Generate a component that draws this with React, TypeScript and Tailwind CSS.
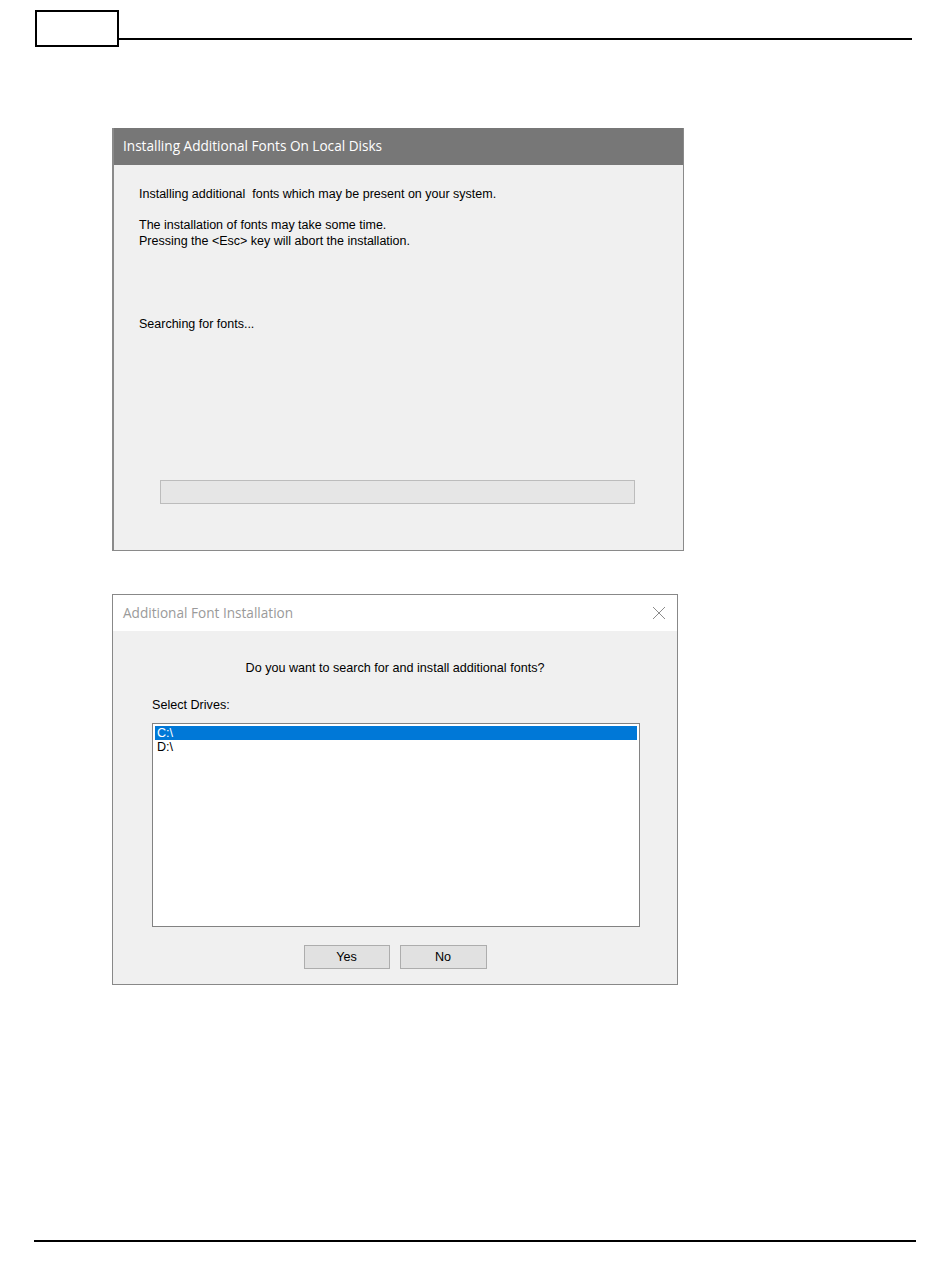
import React from 'react';

const ui = { fontFamily: '"Liberation Sans", Arial, sans-serif' };
const title = { fontFamily: '"Open Sans", "Liberation Sans", sans-serif' };

const ProgressDialog: React.FC = () => (
  <div className="w-[572px] h-[423px] flex flex-col border-l-2 border-r border-b border-[#8a8a8a] bg-[#f0f0f0]">
    <div className="h-[37px] bg-[#777777] flex items-center pl-[9px] text-white text-[13.6px]" style={title}>
      Installing Additional Fonts On Local Disks
    </div>
    <div className="flex flex-col pl-[25px] pt-[21px] text-[12.5px] leading-[16px] text-black" style={ui}>
      <p>Installing additional&nbsp; fonts which may be present on your system.</p>
      <p className="mt-[15px]">The installation of fonts may take some time.</p>
      <p>Pressing the &lt;Esc&gt; key will abort the installation.</p>
      <p className="mt-[67px]">Searching for fonts...</p>
      <div className="ml-[21px] mt-[148px] w-[475px] h-[24px] bg-[#e6e6e6] border border-[#bcbcbc]" />
    </div>
  </div>
);

const DriveDialog: React.FC = () => (
  <div className="w-[566px] h-[391px] flex flex-col border border-[#888888] bg-[#f0f0f0]" style={ui}>
    <div className="h-[36px] bg-white flex items-center justify-between pl-[10px] pr-[11px]">
      <span className="text-[13.6px] text-[#9a9a9a]" style={title}>Additional Font Installation</span>
      <svg width="14" height="14" viewBox="0 0 14 14" className="text-[#8c8c8c]">
        <path d="M1 1 L13 13 M13 1 L1 13" stroke="currentColor" strokeWidth="1" fill="none" />
      </svg>
    </div>
    <div className="flex flex-col text-[12.6px] leading-[16px] text-black">
      <p className="text-center mt-[29px]">Do you want to search for and install additional fonts?</p>
      <p className="ml-[39px] mt-[21px]">Select Drives:</p>
      <div className="ml-[39px] mt-[10px] w-[488px] h-[204px] bg-white border border-[#828282] p-[2px] flex flex-col">
        <div className="h-[14px] bg-[#0078d7] text-white pl-[2px] leading-[14px]">C:\</div>
        <div className="h-[14px] pl-[2px] leading-[14px]">D:\</div>
      </div>
      <div className="flex justify-center gap-[10px] mt-[18px]">
        <button className="w-[86px] h-[24px] bg-[#e1e1e1] border border-[#adadad] text-[12.6px]">Yes</button>
        <button className="w-[87px] h-[24px] bg-[#e1e1e1] border border-[#adadad] text-[12.6px]">No</button>
      </div>
    </div>
  </div>
);

export default function App() {
  return (
    <div className="w-[950px] h-[1267px] bg-white flex flex-col">
      <div className="flex items-end pl-[35px] pr-[38px] pt-[10px]">
        <div className="w-[84px] h-[37px] border-2 border-black" />
        <div className="flex-1 border-b-2 border-black mb-[7px]" />
      </div>
      <div className="pl-[112px] mt-[81px]">
        <ProgressDialog />
      </div>
      <div className="pl-[112px] mt-[43px]">
        <DriveDialog />
      </div>
      <div className="flex-1" />
      <div className="mx-[34px] mb-[25px] border-b-2 border-black" />
    </div>
  );
}
